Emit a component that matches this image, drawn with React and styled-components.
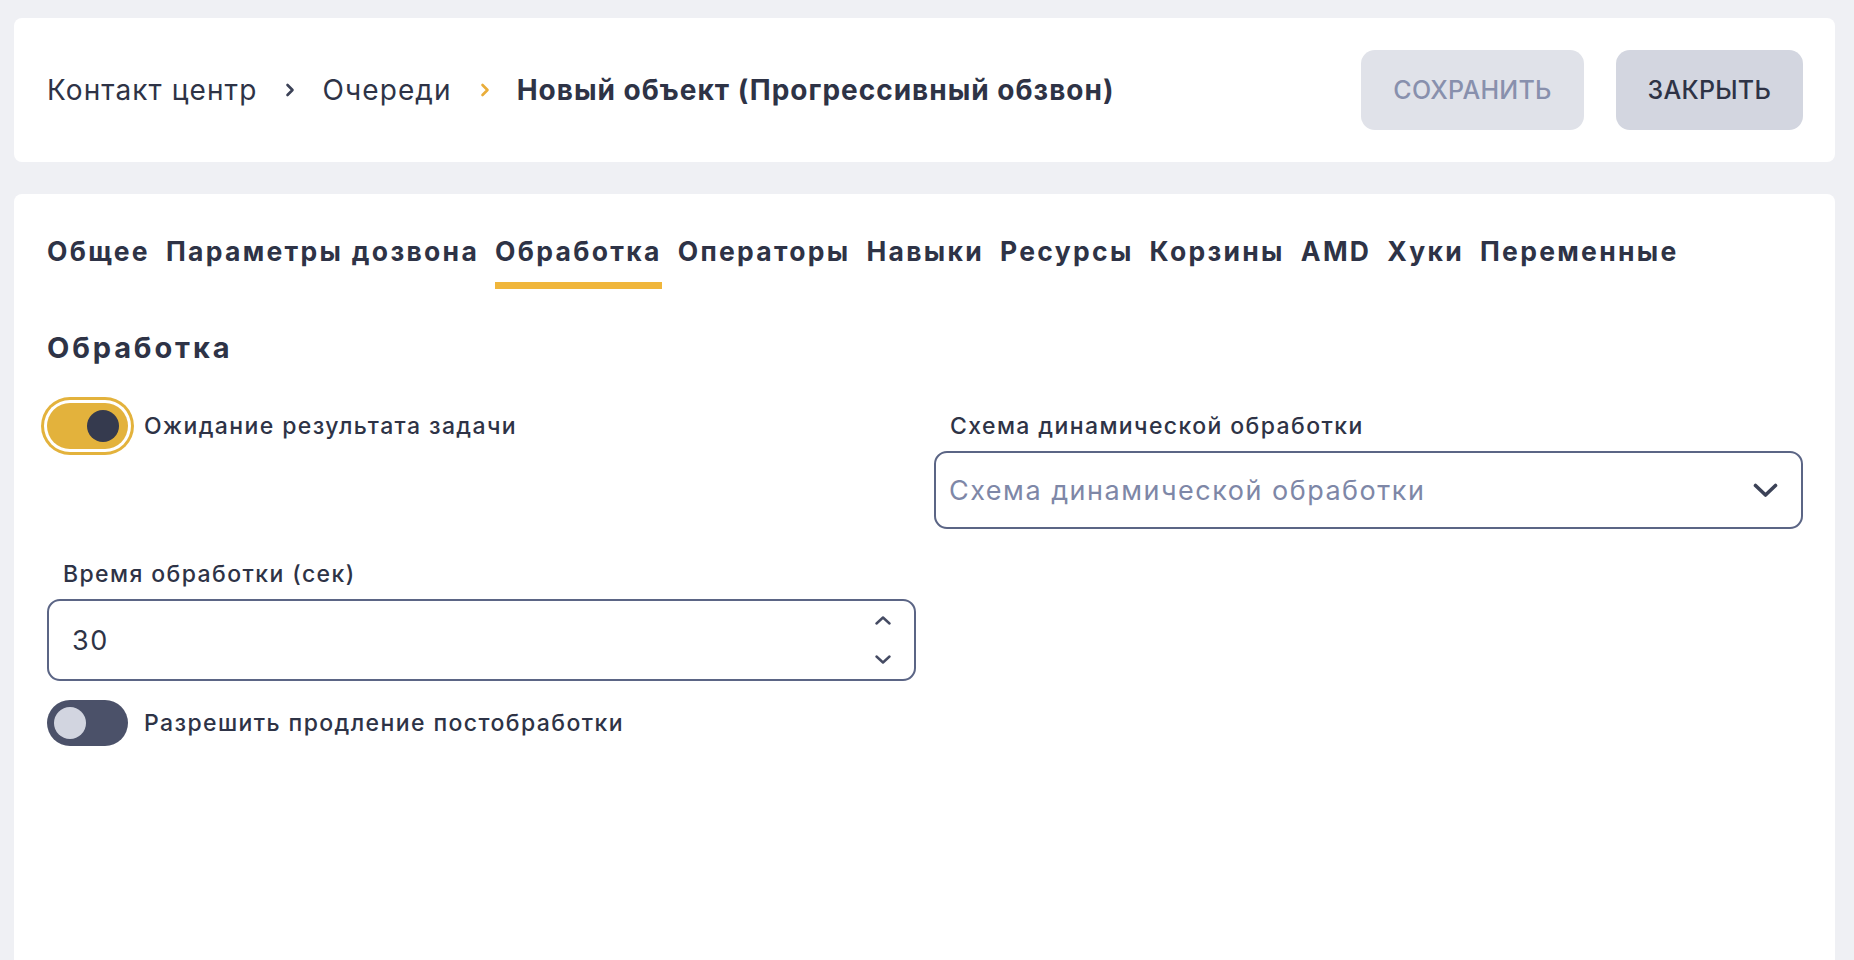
import React from "react";
import styled, { createGlobalStyle } from "styled-components";

const GlobalStyle = createGlobalStyle`
  html, body {
    margin: 0;
    padding: 0;
    background: #eff0f4;
  }
  body {
    font-family: Inter, "Open Sans", "Liberation Sans", sans-serif;
    color: #2e3346;
  }
  * { box-sizing: border-box; }
`;

const Page = styled.div`
  min-height: 100vh;
  padding: 18px 19px 0 14px;
  display: flex;
  flex-direction: column;
  gap: 32px;
`;

const HeaderCard = styled.header`
  height: 144px;
  background: #fff;
  border-radius: 8px;
  padding: 0 32px 0 33px;
  display: flex;
  align-items: center;
  justify-content: space-between;
`;

const Breadcrumbs = styled.nav`
  display: flex;
  align-items: center;
  font-size: 28px;
  color: #2e3346;
`;

const Crumb = styled.span`
  font-weight: ${(p) => (p.current ? 700 : 400)};
  letter-spacing: ${(p) => (p.current ? "1px" : "1.1px")};
`;

const Sep = styled.svg`
  width: 10px;
  height: 14px;
  margin: 0 27px 0 28px;
  color: ${(p) => p.color};
`;

const Actions = styled.div`
  display: flex;
  gap: 32px;
`;

const Button = styled.button`
  height: 80px;
  padding: 0 32px;
  border: none;
  border-radius: 14px;
  font-family: inherit;
  font-size: 25px;
  font-weight: 500;
  letter-spacing: 0.01em;
  background: ${(p) => (p.disabled ? "#e0e2e9" : "#d3d6e0")};
  color: ${(p) => (p.disabled ? "#8890ad" : "#2e3346")};
`;

const ContentCard = styled.main`
  flex: 1;
  background: #fff;
  border-radius: 8px 8px 0 0;
  padding: 42px 32px 40px 33px;
`;

const Tabs = styled.div`
  display: flex;
  gap: 16px;
`;

const Tab = styled.div`
  font-size: 26.5px;
  font-weight: 700;
  line-height: 30px;
  letter-spacing: 2.3px;
  padding-bottom: 16px;
  border-bottom: 7px solid ${(p) => (p.active ? "#f0b63b" : "transparent")};
  color: #2e3346;
`;

const Heading = styled.h2`
  margin: 42px 0 0;
  font-size: 29px;
  font-weight: 700;
  line-height: 34px;
  letter-spacing: 2.85px;
`;

const FormGrid = styled.div`
  margin-top: 38px;
  display: grid;
  grid-template-columns: 1fr 1fr;
  column-gap: 18px;
  row-gap: 22px;
  align-items: start;
`;

const SwitchRow = styled.label`
  display: flex;
  align-items: center;
  gap: 16px;
  margin-top: ${(p) => p.mt || 0}px;
`;

const Track = styled.span`
  position: relative;
  width: 81px;
  height: 46px;
  border-radius: 23px;
  flex-shrink: 0;
  background: ${(p) => (p.on ? "#e3b23c" : "#4b5169")};
  box-shadow: ${(p) => (p.focused ? "0 0 0 3px #fff, 0 0 0 6px #e3b23c" : "none")};
`;

const Knob = styled.span`
  position: absolute;
  top: 7px;
  left: ${(p) => (p.on ? "40px" : "7px")};
  width: 32px;
  height: 32px;
  border-radius: 50%;
  background: ${(p) => (p.on ? "#353a4e" : "#d2d5e0")};
`;

const LabelText = styled.span`
  font-size: 23px;
  font-weight: 500;
  letter-spacing: 1.4px;
  color: #2e3346;
`;

const Field = styled.div`
  display: flex;
  flex-direction: column;
`;

const FieldLabel = styled.div`
  font-size: 23px;
  font-weight: 500;
  line-height: 46px;
  letter-spacing: 1.4px;
  padding-left: 16px;
  margin-bottom: 2px;
  color: #2e3346;
`;

const Box = styled.div`
  height: ${(p) => p.h}px;
  border: 2px solid #5b6585;
  border-radius: 13px;
  display: flex;
  align-items: center;
  justify-content: space-between;
  padding: 0 23px 0 ${(p) => p.pl}px;
  font-size: 27px;
  letter-spacing: 1.5px;
`;

const Placeholder = styled.span`
  color: #7e87a7;
`;

const Value = styled.span`
  color: #2e3346;
`;

const Spinner = styled.div`
  display: flex;
  flex-direction: column;
  gap: 30px;
  color: #454b63;
`;

const Chevron = ({ color }) => (
  <Sep color={color} viewBox="0 0 10 14" fill="none">
    <path d="M2.5 2 L7.5 7 L2.5 12" stroke="currentColor" strokeWidth="2.6" strokeLinecap="round" strokeLinejoin="round" />
  </Sep>
);

const Switch = ({ on, focused, mt, children }) => (
  <SwitchRow mt={mt}>
    <Track on={on} focused={focused}>
      <Knob on={on} />
    </Track>
    <LabelText>{children}</LabelText>
  </SwitchRow>
);

const tabs = ["Общее", "Параметры дозвона", "Обработка", "Операторы", "Навыки", "Ресурсы", "Корзины", "AMD", "Хуки", "Переменные"];

export default function App() {
  return (
    <>
      <GlobalStyle />
      <Page>
        <HeaderCard>
          <Breadcrumbs>
            <Crumb>Контакт центр</Crumb>
            <Chevron color="#3c4257" />
            <Crumb>Очереди</Crumb>
            <Chevron color="#e9ad3a" />
            <Crumb current>Новый объект (Прогрессивный обзвон)</Crumb>
          </Breadcrumbs>
          <Actions>
            <Button disabled>СОХРАНИТЬ</Button>
            <Button>ЗАКРЫТЬ</Button>
          </Actions>
        </HeaderCard>

        <ContentCard>
          <Tabs>
            {tabs.map((t) => (
              <Tab key={t} active={t === "Обработка"}>{t}</Tab>
            ))}
          </Tabs>

          <Heading>Обработка</Heading>

          <FormGrid>
            <Switch on focused>Ожидание результата задачи</Switch>
            <Field>
              <FieldLabel>Схема динамической обработки</FieldLabel>
              <Box h={78} pl={13}>
                <Placeholder>Схема динамической обработки</Placeholder>
                <svg width="25" height="15" viewBox="0 0 25 15" fill="none">
                  <path d="M2.5 2.5 L12.5 12 L22.5 2.5" stroke="#3c4257" strokeWidth="3.6" strokeLinecap="round" strokeLinejoin="round" />
                </svg>
              </Box>
            </Field>

            <Field>
              <FieldLabel>Время обработки (сек)</FieldLabel>
              <Box h={82} pl={23}>
                <Value>30</Value>
                <Spinner>
                  <svg width="16" height="9" viewBox="0 0 16 9" fill="none">
                    <path d="M1.5 7.5 L8 1.5 L14.5 7.5" stroke="currentColor" strokeWidth="2.4" strokeLinecap="round" strokeLinejoin="round" />
                  </svg>
                  <svg width="16" height="9" viewBox="0 0 16 9" fill="none">
                    <path d="M1.5 1.5 L8 7.5 L14.5 1.5" stroke="currentColor" strokeWidth="2.4" strokeLinecap="round" strokeLinejoin="round" />
                  </svg>
                </Spinner>
              </Box>
            </Field>
            <div />

            <Switch mt={-3}>Разрешить продление постобработки</Switch>
          </FormGrid>
        </ContentCard>
      </Page>
    </>
  );
}
